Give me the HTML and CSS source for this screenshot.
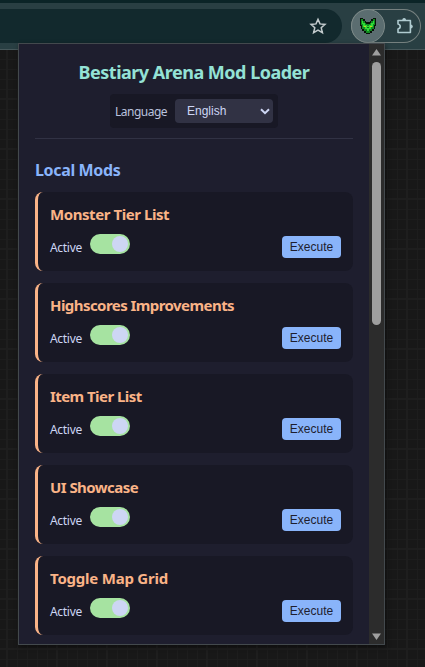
FILE: index.html
```html
<!DOCTYPE html>
<html lang="en">
<head>
<meta charset="utf-8">
<title>Bestiary Arena Mod Loader</title>
<link rel="stylesheet" href="styles.css">
</head>
<body>
<header class="toolbar">
  <div class="omnibox">
    <svg class="star" width="18" height="18" viewBox="0 0 18 18"><path d="M9 2.3 11 6.9 16 7.4 12.2 10.7 13.4 15.6 9 13 4.6 15.6 5.8 10.7 2 7.4 7 6.9Z"/></svg>
  </div>
  <div class="extensions">
    <div class="ext-active">
      <svg width="18" height="18" viewBox="0 0 18 18" shape-rendering="crispEdges">
        <path fill="#071208" d="M1 1h3v1h2v2h1v1h4V4h1V2h2V1h3v8h-1v3h-1v2h-2v2h-2v1H7v-1H5v-2H3v-2H2V9H1z"/>
        <path fill="#128a22" d="M2 2h2v2h2v2h1v1h4V6h1V4h2V2h2v6h-1v4h-2v2h-2v2H7v-2H5v-2H3V8H2z"/>
        <path fill="#2fdc35" d="M3 4h1v2h2v2h2v1h2V8h2V6h2V4h1v3h-1v3h-2v2h-2v2H8v-2H6v-2H4V7H3z"/>
        <path fill="#c6d51c" d="M5 9h2v1H5zM11 9h2v1h-2z"/>
        <path fill="#0d661b" d="M8 10h2v1H8zM7 13h1v1H7zM10 13h1v1h-1z"/>
      </svg>
    </div>
    <svg class="puzzle" width="20" height="20" viewBox="0 0 20 20"><path d="M4 4.5H16.4V16.5H4V13Q6.2 12.5 6.2 10.5T4 8Z"/><path class="tabs" d="M8.4 4V3Q10.1 1.2 11.9 3V4ZM17 8.7H18Q19.8 10.5 18 12.3H17Z"/></svg>
  </div>
</header>
<main class="popup">
  <div class="content">
    <h1>Bestiary Arena Mod Loader</h1>
    <div class="language">
      <span class="language-label">Language</span>
      <div class="select"><span>English</span><svg width="10" height="7" viewBox="0 0 10 7"><path d="M1 1.2 5 5.2 9 1.2"/></svg></div>
    </div>
    <hr>
    <h2>Local Mods</h2>
    <section class="mods">
      <article class="card"><h3>Monster Tier List</h3><div class="row"><span class="active">Active</span><span class="toggle"></span><button>Execute</button></div></article>
      <article class="card"><h3 class="tight">Highscores Improvements</h3><div class="row"><span class="active">Active</span><span class="toggle"></span><button>Execute</button></div></article>
      <article class="card"><h3 class="tight">Item Tier List</h3><div class="row"><span class="active">Active</span><span class="toggle"></span><button>Execute</button></div></article>
      <article class="card"><h3 class="tight">UI Showcase</h3><div class="row"><span class="active">Active</span><span class="toggle"></span><button>Execute</button></div></article>
      <article class="card"><h3 class="loose">Toggle Map Grid</h3><div class="row"><span class="active">Active</span><span class="toggle"></span><button>Execute</button></div></article>
    </section>
  </div>
  <div class="scrollbar">
    <svg width="9" height="7" viewBox="0 0 9 7"><path d="M4.5 0 9 6.5H0Z"/></svg>
    <div class="thumb"></div>
    <svg class="down" width="9" height="7" viewBox="0 0 9 7"><path d="M0 .5H9L4.5 7Z"/></svg>
  </div>
</main>
</body>
</html>
```
FILE: styles.css
```css
* { box-sizing: border-box; }
body {
  margin: 0;
  height: 667px;
  overflow: hidden;
  position: relative;
  font-family: "Noto Sans", sans-serif;
  color: #cdd6f4;
  background-color: #181818;
  background-image:
    linear-gradient(90deg, #1e1e1e 2px, transparent 2px),
    linear-gradient(#1e1e1e 2px, transparent 2px),
    linear-gradient(90deg, #1d1d1d 1px, transparent 1px),
    linear-gradient(#1d1d1d 1px, transparent 1px);
  background-size: 50px 50px, 50px 50px, 10px 10px, 10px 10px;
  background-position: 6px 0, 0 48px, 7px 0, 0 9px;
}
.toolbar {
  height: 50px;
  display: flex;
  align-items: flex-start;
  gap: 9px;
  padding-top: 6px;
  background: #293f43;
  border-top: 3px solid #0b2427;
  border-bottom: 1px solid #46575a;
}
.omnibox {
  width: 342px;
  height: 34px;
  border-radius: 0 17px 17px 0;
  background: #12292d;
  display: flex;
  align-items: center;
  justify-content: flex-end;
  padding-right: 15px;
}
.star path { fill: none; stroke: #c3cbcd; stroke-width: 1.5; }
.extensions {
  width: 70px;
  height: 34px;
  border-radius: 17px;
  display: flex;
  align-items: center;
  gap: 9px;
  box-shadow: inset 0 0 0 1px #75807f;
}
.ext-active {
  width: 34px;
  height: 34px;
  border-radius: 50%;
  background: #5b6d70;
  border: 1px solid #7b8887;
  display: flex;
  align-items: center;
  justify-content: center;
}
.puzzle { fill: none; stroke: #b0cbd0; stroke-width: 1.6; stroke-linejoin: round; }
.puzzle .tabs { fill: #b0cbd0; stroke: none; }
.popup {
  position: absolute;
  left: 18px;
  top: 43px;
  width: 367px;
  height: 602px;
  display: flex;
  border: 1px solid #43494d;
  background: #1e1e2e;
  box-shadow: 1px 2px 5px rgba(0, 0, 0, .45);
}
.content { width: 350px; padding: 16px 16px 0; overflow: hidden; }
h1, h2, h3 { margin: 0; font-weight: 700; white-space: nowrap; }
h1 {
  font-size: 18px;
  line-height: 24px;
  letter-spacing: -.5px;
  text-align: center;
  color: #94e2d5;
}
.language {
  width: 168px;
  height: 34px;
  margin: 10px auto 10px;
  padding: 0 5px;
  border-radius: 4px;
  background: #181825;
  display: flex;
  align-items: center;
  justify-content: space-between;
}
.language-label { font-size: 12px; letter-spacing: -.5px; color: #bac2de; padding-top: 1px; }
.select {
  width: 98px;
  height: 24px;
  border-radius: 4px;
  background: #313244;
  padding: 0 3px 0 12px;
  display: flex;
  align-items: center;
  justify-content: space-between;
  font: 12px "Liberation Sans", sans-serif;
}
.select path { fill: none; stroke: #cdd6f4; stroke-width: 2; }
hr { margin: 0; border: 0; height: 1px; background: #313244; }
h2 { margin-top: 20px; font-size: 16px; line-height: 22px; letter-spacing: -.35px; color: #89b4fa; }
.mods { margin-top: 11px; display: grid; gap: 12px; }
.card {
  height: 79px;
  padding: 12px 12px 0;
  border-left: 3px solid #fab387;
  border-radius: 8px;
  background: #181825;
}
h3 { font-size: 15px; line-height: 21px; letter-spacing: -.43px; color: #fab387; }
.tight { letter-spacing: -.56px; }
.loose { letter-spacing: -.22px; }
.row { height: 33px; display: flex; align-items: flex-end; }
.active { width: 40px; font-size: 12px; line-height: 18px; padding-bottom: 1px; letter-spacing: -.3px; color: #cdd6f4; }
.toggle {
  width: 40px;
  height: 20px;
  margin-bottom: 4px;
  padding: 2px;
  border-radius: 10px;
  background: #a6e3a1;
  display: flex;
  justify-content: flex-end;
}
.toggle::after { content: ""; width: 16px; height: 16px; border-radius: 50%; background: #cdd6f4; }
button {
  margin-left: auto;
  width: 59px;
  height: 22px;
  padding: 0;
  border: 0;
  border-radius: 4px;
  background: #89b4fa;
  color: #1e1e2e;
  font: 12px "Liberation Sans", sans-serif;
}
.scrollbar {
  width: 15px;
  background: #2c2c2c;
  display: flex;
  flex-direction: column;
  align-items: center;
  padding: 5px 0 4px;
}
.scrollbar path { fill: #9f9f9f; }
.thumb { width: 9px; height: 263px; margin-top: 6px; border-radius: 5px; background: #9f9f9f; }
.down { margin-top: auto; }
```
